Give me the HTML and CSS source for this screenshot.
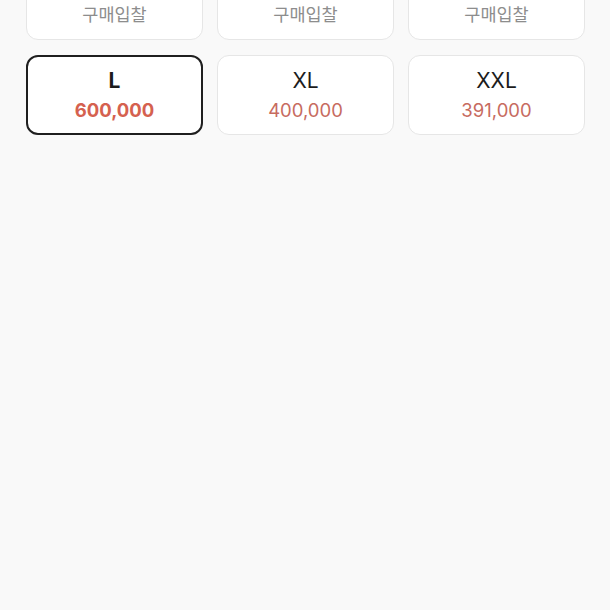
FILE: index.html
```html
<!DOCTYPE html>
<html lang="ko">
<head>
    <meta charset="UTF-8">
    <meta name="viewport" content="width=device-width, initial-scale=1.0">
    <title>사이즈 선택</title>
    <link rel="stylesheet" href="styles.css">
</head>
<body>
    <div class="size-grid">
        <div class="size-card">
            <div class="size-name">XS</div>
            <div class="size-price muted">구매입찰</div>
        </div>
        <div class="size-card">
            <div class="size-name">S</div>
            <div class="size-price muted">구매입찰</div>
        </div>
        <div class="size-card">
            <div class="size-name">M</div>
            <div class="size-price muted">구매입찰</div>
        </div>

        <div class="size-card selected">
            <div class="size-name">L</div>
            <div class="size-price">600,000</div>
        </div>
        <div class="size-card">
            <div class="size-name">XL</div>
            <div class="size-price">400,000</div>
        </div>
        <div class="size-card">
            <div class="size-name">XXL</div>
            <div class="size-price">391,000</div>
        </div>
    </div>
</body>
</html>
```

FILE: styles.css
```css
* {
    box-sizing: border-box;
}
body {
    margin: 0;
    background-color: #f9f9f9;
    font-family: Inter, "Noto Sans CJK KR", sans-serif;
    color: #1c1c1c;
}
.size-grid {
    display: grid;
    grid-template-columns: repeat(3, 177px);
    column-gap: 14px;
    row-gap: 15px;
    margin-top: -40px;
    padding: 0 25px 0 26px;
}
.size-card {
    height: 80px;
    background-color: #fff;
    border: 1px solid #e6e6e6;
    border-radius: 12px;
    display: flex;
    flex-direction: column;
    align-items: center;
    justify-content: center;
    gap: 4px;
}
.size-name {
    font-size: 21px;
    line-height: 26px;
}
.size-price {
    font-size: 18.5px;
    line-height: 24px;
    color: #c76b5f;
}
.size-price.muted {
    font-size: 17.5px;
    line-height: 28px;
    color: #8d8d8d;
}
.size-card.selected {
    border: 2px solid #1f1f1f;
}
.size-card.selected .size-name {
    font-weight: 700;
}
.size-card.selected .size-price {
    font-weight: 700;
    color: #d5614f;
}
```
